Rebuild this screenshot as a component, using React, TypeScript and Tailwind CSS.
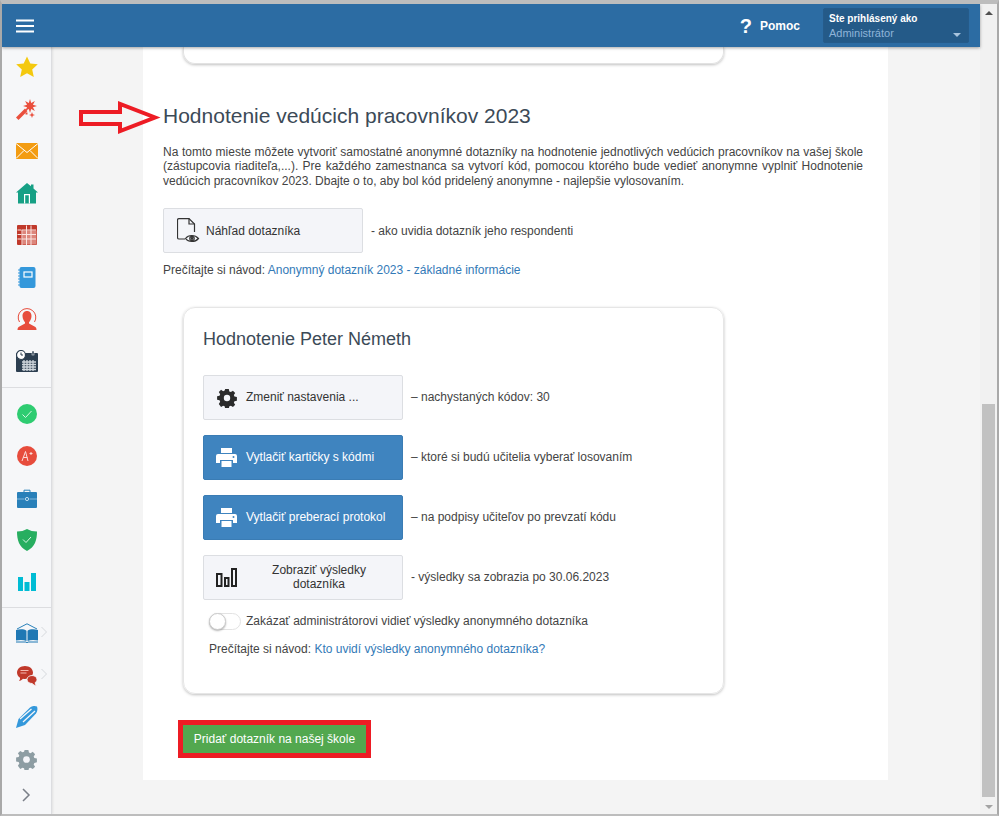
import { ReactNode } from 'react';

const PrinterIcon = () => (
  <svg width="21" height="19" viewBox="0 0 21 19" fill="#fff">
    <path d="M5 0h11v5H5z" />
    <path d="M2 6h17a2 2 0 0 1 2 2v7h-4v-3H4v3H0V8a2 2 0 0 1 2-2z" />
    <path d="M5.500 13h10v6h-10z" />
    <circle cx="17.500" cy="9" r="1" fill="#3f84bf" />
  </svg>
);

const GearIcon = ({ color = '#2b2b2b', size = 20 }: { color?: string; size?: number }) => (
  <svg width={size} height={size} viewBox="0 0 20 20" fill={color}>
    <path d="M8 0h4l.6 2.700 1.700.7 2.300-1.500 2.500 2.500-1.500 2.300.7 1.700 2.700.6v4l-2.700.6-.7 1.700 1.500 2.300-2.500 2.500-2.300-1.500-1.700.7-.6 2.700H8l-.6-2.700-1.700-.7-2.300 1.500L.9 16.600l1.500-2.300-.7-1.700L-1 12V8l2.700-.6.7-1.700L.9 3.400l2.500-2.500 2.300 1.500 1.700-.7z" transform="translate(1 1) scale(.9)" />
    <circle cx="10" cy="10" r="3.200" fill="#f4f5f9" />
  </svg>
);

const ChartOutline = () => (
  <svg width="21" height="19" viewBox="0 0 21 19" fill="none" stroke="#222" strokeWidth="2">
    <rect x="1" y="6" width="4.500" height="12" />
    <rect x="9" y="10" width="3.500" height="8" />
    <rect x="16" y="1" width="4" height="17" />
  </svg>
);

const DocEye = () => (
  <svg width="24" height="26" viewBox="0 0 24 26" fill="none" stroke="#333" strokeWidth="1.200">
    <path d="M8 21H2a1.500 1.500 0 0 1-1.500-1.500V2A1.500 1.500 0 0 1 2 .6h10l5.500 5.400V14" />
    <path d="M12 .6V6h5.500" />
    <path d="M8.500 20.500c3-4 9.500-4 13 0-3.500 4-10 4-13 0z" />
    <circle cx="15" cy="20.500" r="2.200" />
    <circle cx="15" cy="20.500" r=".8" fill="#333" />
  </svg>
);

const sideIcons: { key: string; icon: ReactNode; arrow?: boolean }[] = [
  {
    key: 'star',
    icon: (
      <svg width="22" height="22" viewBox="0 0 22 22">
        <path fill="#f4c90f" d="M11 .5l3.300 7 7.500.8-5.600 5.100 1.600 7.600L11 17.200 4.200 21l1.600-7.600L.2 8.300l7.500-.8z" />
      </svg>
    ),
  },
  {
    key: 'wand',
    icon: (
      <svg width="22" height="22" viewBox="0 0 22 22" fill="#ea4f3d">
        <path d="M0 19.500 9 10.500l2.500 2.500L2.500 22z" />
        <path d="M21 8 16.950 9.200 18.900 12.900 15.200 10.950 14 15 12.800 10.950 9.100 12.900 11.050 9.200 7 8 11.050 6.800 9.100 3.100 12.800 5.050 14 1 15.200 5.050 18.900 3.100 16.950 6.800z" />
        <path d="M16 14l.8 2.200 2.200.8-2.200.8-.8 2.200-.8-2.200-2.200-.8 2.200-.8z" />
        <rect x="9.500" y="14.500" width="2" height="2" />
      </svg>
    ),
  },
  {
    key: 'mail',
    icon: (
      <svg width="22" height="16" viewBox="0 0 22 16">
        <rect width="22" height="16" fill="#f39c12" />
        <path d="M0 .5 11 9.500 22 .5M0 15.500l8-8M22 15.500l-8-8" fill="none" stroke="#fff" strokeWidth="1" />
      </svg>
    ),
  },
  {
    key: 'home',
    icon: (
      <svg width="22" height="21" viewBox="0 0 22 21">
        <path fill="#16a085" d="M11 0l4 3.300V1.500h2.500v4L22 9.500h-2V20.500H2V9.500H0z" />
        <path fill="#fff" d="M8 11h6v9.500h-1.200V12.200H9.200v8.300H8z" />
      </svg>
    ),
  },
  {
    key: 'table',
    icon: (
      <svg width="20" height="20" viewBox="0 0 20 20">
        <rect width="20" height="20" rx="1" fill="#c0392b" />
        <rect x="5.500" y="5.500" width="14" height="14" fill="#f3c6c0" opacity=".55" />
        <path
          d="M5 5h14M5 9.500h14M5 14h14M.5 5h4M.5 9.500h4M.5 14h4M5 5v15M9.500 .5V20M14 .5V20"
          stroke="#fbe5e2"
          strokeWidth="1"
        />
      </svg>
    ),
  },
  {
    key: 'notebook',
    icon: (
      <svg width="18" height="21" viewBox="0 0 18 21">
        <rect x="1.500" width="16" height="21" rx="2" fill="#3498db" />
        <path d="M0 3h3M0 6h3M0 9h3M0 12h3M0 15h3M0 18h3" stroke="#3498db" strokeWidth="1.200" />
        <rect x="6" y="5" width="8" height="5" fill="none" stroke="#fff" strokeWidth="1.200" />
      </svg>
    ),
  },
  {
    key: 'person',
    icon: (
      <svg width="20" height="22" viewBox="0 0 20 22" fill="#e74c3c">
        <path d="M10 3c3 0 4.500 2.300 4.500 5s-1.500 5.500-2.500 6.300v1.200l6 3.300c1 .5 1.500 1.500 1.500 3.200H.5c0-1.700.5-2.700 1.500-3.200l6-3.300v-1.200C7 13.500 5.500 10.700 5.500 8S7 3 10 3z" />
        <path d="M2.500 14A8.800 8.800 0 1 1 17.500 14" fill="none" stroke="#e74c3c" strokeWidth="1" />
      </svg>
    ),
  },
  {
    key: 'calendar',
    icon: (
      <svg width="22" height="22" viewBox="0 0 22 22">
        <rect y="3" width="22" height="19" rx="1" fill="#2c3e50" />
        <path d="M6 12h14M6 14.500h14M6 17h14M6 19.500h14M8 10v11M11 10v11M14 10v11M17 10v11" stroke="#cfd6dc" strokeWidth="1.300" />
        <rect x="16" y="1" width="2" height="4" fill="#2c3e50" stroke="#fff" strokeWidth=".5" />
        <circle cx="5" cy="5" r="4.500" fill="#fff" stroke="#2c3e50" strokeWidth="1.200" />
        <path d="M5 2.500V5h2" fill="none" stroke="#2c3e50" />
      </svg>
    ),
  },
];

const sideIcons2: typeof sideIcons = [
  {
    key: 'check',
    icon: (
      <svg width="20" height="20" viewBox="0 0 20 20">
        <circle cx="10" cy="10" r="10" fill="#2ecc71" />
        <path d="M5.500 10.500l3 3 6-6.500" fill="none" stroke="#d6f7e3" strokeWidth="1" />
      </svg>
    ),
  },
  {
    key: 'aplus',
    icon: (
      <svg width="20" height="20" viewBox="0 0 20 20">
        <circle cx="10" cy="10" r="10" fill="#e74c3c" />
        <path d="M5 15 8.500 5.500 11 15M6.300 11.500h4M12.500 7.500h3M14 6v3" fill="none" stroke="#fbdcd8" strokeWidth="1" />
      </svg>
    ),
  },
  {
    key: 'briefcase',
    icon: (
      <svg width="20" height="19" viewBox="0 0 20 19">
        <path d="M7 3V1.200h6V3" fill="none" stroke="#2980b9" strokeWidth="1" />
        <rect y="3" width="20" height="16" rx="1" fill="#2980b9" />
        <path d="M0 10h7.500M12.500 10H20" stroke="#a9d0ea" strokeWidth=".7" />
        <circle cx="10" cy="10" r="1.600" fill="none" stroke="#cfe5f4" strokeWidth=".9" />
      </svg>
    ),
  },
  {
    key: 'shield',
    icon: (
      <svg width="20" height="22" viewBox="0 0 20 22">
        <path fill="#27ae60" d="M10 0c3 1.700 6 2.500 10 2.500C20 11 18 18 10 22 2 18 0 11 0 2.500 4 2.500 7 1.700 10 0z" />
        <path d="M6 10.500l3 3 5-5.500" fill="none" stroke="#d6f7e3" strokeWidth="1" />
      </svg>
    ),
  },
  {
    key: 'chart',
    icon: (
      <svg width="18" height="18" viewBox="0 0 18 18" fill="#00bcd4">
        <rect y="4" width="5" height="14" />
        <rect x="6.500" y="9" width="5" height="9" />
        <rect x="13" width="5" height="18" />
      </svg>
    ),
  },
];

const sideIcons3: typeof sideIcons = [
  {
    key: 'book',
    arrow: true,
    icon: (
      <svg width="22" height="20" viewBox="0 0 22 20">
        <path d="M1 6 11 .8 21 6" fill="none" stroke="#2980b9" strokeWidth="1" />
        <path fill="#1f78b4" d="M0 7c4-1 8-1 10.500.8V18c-3-1.200-7-1.200-10.500-.4zM22 7c-4-1-8-1-10.500.8V18c3-1.200 7-1.200 10.500-.4z" />
        <path d="M0 19h10l1 .8 1-.8h10" fill="none" stroke="#1f78b4" strokeWidth="1" />
      </svg>
    ),
  },
  {
    key: 'chat',
    arrow: true,
    icon: (
      <svg className="mt-[1px]" width="20" height="20" viewBox="0 0 20 20">
        <path fill="#c0392b" d="M8 0c4.400 0 8 2.800 8 6.500S12.400 13 8 13c-.7 0-1.400-.1-2-.2C5 14 3.400 14.800 2 15c.8-.9 1.100-1.900 1-3.300C1.200 10.500 0 8.700 0 6.500 0 2.800 3.600 0 8 0z" />
        <path d="M3.500 4.500h8M3.500 7h6" stroke="#f4b9b1" strokeWidth="1.200" />
        <path fill="#c0392b" stroke="#f6f7f9" strokeWidth=".9" d="M15 9.500c2.800 0 5 1.700 5 4 0 1.300-.7 2.400-1.800 3.100 0 1.200.4 2.300 1.300 3.200-1.700-.2-3.300-1-4.200-2.300H15c-2.800 0-5-1.700-5-4s2.200-4 5-4z" />
      </svg>
    ),
  },
  {
    key: 'pencil',
    icon: (
      <svg width="22" height="22" viewBox="0 0 22 22">
        <path fill="#3498db" d="M0 22 2.500 13 14 1.500c2-1.500 4-2 7-1 .8 2.500.5 4.500-1 7L9 19z" />
        <path d="M4 13 15.500 3M7 16 19 5" stroke="#f5f6f8" strokeWidth="1.300" />
      </svg>
    ),
  },
  { key: 'gear', icon: <GearIcon color="#8d9da3" size={21} /> },
];

function SideItem({ icon, arrow }: { icon: ReactNode; arrow?: boolean }) {
  return (
    <div className="relative flex h-[42px] shrink-0 items-center justify-center">
      {icon}
      {arrow && (
        <svg className="absolute left-[39px] top-[14px]" width="6" height="12" viewBox="0 0 6 12" fill="none" stroke="#d5d8dc">
          <path d="M.5 1l5 5-5 5" />
        </svg>
      )}
    </div>
  );
}

function ActionRow({
  icon,
  label,
  note,
  primary,
  center,
}: {
  icon: ReactNode;
  label: string;
  note: string;
  primary?: boolean;
  center?: boolean;
}) {
  return (
    <div className="flex items-center">
      <div
        className={`flex h-[45px] w-[200px] shrink-0 items-center rounded-[2px] border pl-[12px] ${
          center ? 'pr-[10px]' : 'pr-[8px]'
        } ${
          primary
            ? 'border-[#3a7cb4] bg-[#3f84bf] text-white'
            : 'border-[#dcdee2] bg-[#f4f5f9] text-[#333]'
        }`}
      >
        <div className="flex w-[21px] shrink-0 justify-center">{icon}</div>
        <span className={`ml-[9px] pb-[2px] leading-[14px] ${center ? 'flex-1 text-center' : ''}`}>{label}</span>
      </div>
      <span className="ml-[8px] pb-[2px]">{note}</span>
    </div>
  );
}

export default function App() {
  return (
    <div className="relative flex h-[816px] w-[999px] flex-col overflow-hidden border-x-[2px] border-t-[4px] border-b-[2px] border-x-[#a9a9a9] border-t-[#bdbdbd] border-b-[#bdbdbd] bg-[#f4f4f4] font-['Liberation_Sans',Arial,sans-serif] text-[12px] text-[#444]">
      <div className="flex min-h-0 flex-1">
        <div className="flex min-w-0 flex-1 flex-col">
          <header className="z-10 flex h-[43px] shrink-0 items-center bg-[#2c6ca3] text-white shadow-[0_1px_3px_rgba(0,0,0,.35)]">
            <svg className="ml-[14px]" width="19" height="14" viewBox="0 0 19 14" fill="none" stroke="#fff" strokeWidth="2">
              <path d="M0 1.500h18M0 7h18M0 12.500h18" />
            </svg>
            <div className="ml-auto flex items-center">
              <span className="text-[20px] font-bold leading-none">?</span>
              <span className="ml-[8px] text-[12px] font-bold">Pomoc</span>
              <div className="relative ml-[23px] mr-[11px] h-[35px] w-[146px] rounded-[2px] border border-[#255b8a] bg-[#245a88] pl-[5px] pt-[3px] leading-[14px]">
                <div className="text-[10px] font-bold">Ste prihlásený ako</div>
                <div className="text-[11px] text-[#8fb4d8]">Administrátor</div>
                <div className="absolute right-[7px] top-[24px] h-0 w-0 border-x-[4px] border-t-[4px] border-x-transparent border-t-[#a8c4de]" />
              </div>
            </div>
          </header>

          <div className="flex min-h-0 flex-1">
            <aside className="flex w-[50px] shrink-0 flex-col overflow-hidden border-r border-[#dcdde0] bg-[#f6f7f9] shadow-[1px_0_2px_rgba(0,0,0,.08)]">
              <div className="-mt-px flex shrink-0 flex-col">
                {sideIcons.map(({ key, icon }) => (
                  <SideItem key={key} icon={icon} />
                ))}
              </div>
              <div className="my-[5px] h-px shrink-0 bg-[#dcdde0]" />
              <div className="flex shrink-0 flex-col">
                {sideIcons2.map(({ key, icon }) => (
                  <SideItem key={key} icon={icon} />
                ))}
              </div>
              <div className="my-[4px] h-px shrink-0 bg-[#dcdde0]" />
              <div className="flex shrink-0 flex-col">
                {sideIcons3.map(({ key, icon, arrow }) => (
                  <SideItem key={key} icon={icon} arrow={arrow} />
                ))}
              </div>
              <div className="flex h-[30px] shrink-0 items-center justify-center">
                <svg width="9" height="14" viewBox="0 0 9 14" fill="none" stroke="#7a7f88" strokeWidth="1.500">
                  <path d="M1 1l6 6-6 6" />
                </svg>
              </div>
            </aside>

            <main className="min-w-0 flex-1 pl-[91px] pr-[91px]">
              <div className="h-[733px] w-[745px] bg-white pl-[20px] pr-[25px]">
                <div className="ml-[20px] h-[17px] w-[541px] rounded-b-[12px] border border-t-0 border-[#e2e2e2] shadow-[0_1px_3px_rgba(0,0,0,.25)]" />

                <h2 className="mt-[40px] text-[21px] leading-[24px] text-[#3c4a57]">Hodnotenie vedúcich pracovníkov 2023</h2>
                <p className="mt-[17px] w-[700px] text-justify leading-[14.4px]">
                  Na tomto mieste môžete vytvoriť samostatné anonymné dotazníky na hodnotenie jednotlivých vedúcich pracovníkov na vašej škole (zástupcovia riaditeľa,...). Pre každého zamestnanca sa vytvorí kód, pomocou ktorého bude vedieť anonymne vyplniť Hodnotenie vedúcich pracovníkov 2023. Dbajte o to, aby bol kód pridelený anonymne - najlepšie vylosovaním.
                </p>

                <div className="mt-[20px] flex items-center">
                  <div className="flex h-[45px] w-[200px] items-center rounded-[2px] border border-[#dcdee2] bg-[#f4f5f9] pl-[13px] text-[#333]">
                    <DocEye />
                    <span className="ml-[5px]">Náhľad dotazníka</span>
                  </div>
                  <span className="ml-[8px]">- ako uvidia dotazník jeho respondenti</span>
                </div>

                <p className="mt-[10px] leading-[14px]">
                  Prečítajte si návod: <span className="text-[#337ab7]">Anonymný dotazník 2023 - základné informácie</span>
                </p>

                <section className="ml-[20px] mt-[30px] h-[387px] w-[541px] rounded-[12px] border border-[#e6e6e6] px-[19px] pt-[20px] shadow-[0_1px_3px_rgba(0,0,0,.25)]">
                  <h3 className="text-[18px] leading-[22px] text-[#3c4a57]">Hodnotenie Peter Németh</h3>
                  <div className="mt-[25px] flex flex-col gap-[15px]">
                    <ActionRow icon={<GearIcon />} label="Zmeniť nastavenia ..." note="– nachystaných kódov: 30" />
                    <ActionRow primary icon={<PrinterIcon />} label="Vytlačiť kartičky s kódmi" note="– ktoré si budú učitelia vyberať losovaním" />
                    <ActionRow primary icon={<PrinterIcon />} label="Vytlačiť preberací protokol" note="– na podpisy učiteľov po prevzatí kódu" />
                    <ActionRow center icon={<ChartOutline />} label="Zobraziť výsledky dotazníka" note="- výsledky sa zobrazia po 30.06.2023" />
                  </div>
                  <div className="mt-[12px] flex items-center pl-[6px]">
                    <div className="relative h-[17px] w-[32px] rounded-full border border-[#e3e3e3] bg-white">
                      <div className="absolute -left-px -top-px h-[17px] w-[17px] rounded-full border border-[#ccc] bg-white shadow-[0_1px_2px_rgba(0,0,0,.3)]" />
                    </div>
                    <span className="ml-[5px]">Zakázať administrátorovi vidieť výsledky anonymného dotazníka</span>
                  </div>
                  <p className="mt-[12px] pl-[6px] leading-[14px]">
                    Prečítajte si návod: <span className="text-[#337ab7]">Kto uvidí výsledky anonymného dotazníka?</span>
                  </p>
                </section>

                <div className="ml-[15px] mt-[26px] inline-block border-[5px] border-[#ed1c24]">
                  <div className="flex h-[28px] w-[183px] items-center justify-center bg-[#52a84f] text-white">
                    Pridať dotazník na našej škole
                  </div>
                </div>
              </div>
            </main>
          </div>
        </div>

        <div className="relative w-[17px] shrink-0 bg-[#f1f1f1]">
          <div className="absolute left-[5px] top-[7px] h-0 w-0 border-x-[4px] border-b-[4px] border-x-transparent border-b-[#505050]" />
          <div className="absolute bottom-[17px] left-[2px] h-[393px] w-[13px] bg-[#c1c1c1]" />
          <div className="absolute bottom-[5px] left-[5px] h-0 w-0 border-x-[4px] border-t-[4px] border-x-transparent border-t-[#a3a3a3]" />
        </div>
      </div>

      {/* Hand-drawn arrow next to the heading */}
      <svg className="absolute left-[75px] top-[94px]" width="88" height="38" viewBox="0 0 88 38" fill="none" stroke="#ed1c24" strokeWidth="4">
        <path d="M4 14H43V6L78 19.500 43 33v-7H4z" />
      </svg>
    </div>
  );
}
